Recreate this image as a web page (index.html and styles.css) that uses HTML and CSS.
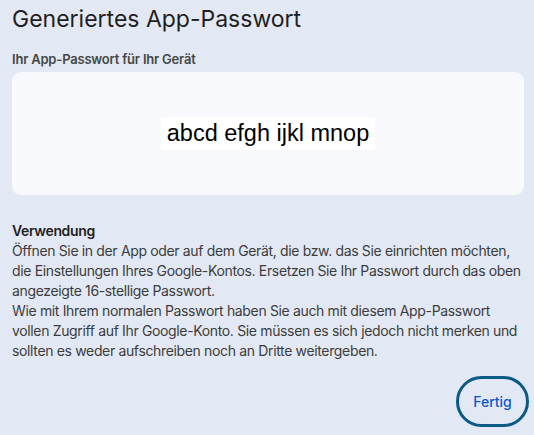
FILE: index.html
```html
<!DOCTYPE html>
<html lang="de">
<head>
    <meta charset="UTF-8">
    <title>Generiertes App-Passwort</title>
    <link rel="stylesheet" href="styles.css">
</head>
<body>
    <div class="dialog">
        <h1>Generiertes App-Passwort</h1>
        <h2>Ihr App-Passwort für Ihr Gerät</h2>
        <div class="pw-card">
            <span class="pw-value">abcd efgh ijkl mnop</span>
        </div>
        <div class="usage">
            <strong>Verwendung</strong>
            <p>Öffnen Sie in der App oder auf dem Gerät, die bzw. das Sie einrichten möchten,<br>
               die Einstellungen Ihres Google-Kontos. Ersetzen Sie Ihr Passwort durch das oben<br>
               angezeigte 16-stellige Passwort.</p>
            <p>Wie mit Ihrem normalen Passwort haben Sie auch mit diesem App-Passwort<br>
               vollen Zugriff auf Ihr Google-Konto. Sie müssen es sich jedoch nicht merken und<br>
               sollten es weder aufschreiben noch an Dritte weitergeben.</p>
        </div>
        <div class="actions">
            <button class="done">Fertig</button>
        </div>
    </div>
</body>
</html>
```
FILE: styles.css
```css
body {
    margin: 0;
    background: #e3e9f4;
    font-family: 'Inter', 'Open Sans', sans-serif;
    color: #1f1f1f;
}

.dialog {
    padding: 4px 10px 6px 12px;
}

.dialog h1 {
    margin: 0;
    font-size: 23px;
    font-weight: 400;
    line-height: 30px;
    color: #1f1f1f;
}

.dialog h2 {
    margin: 17px 0 5px;
    font-size: 13px;
    font-weight: 600;
    line-height: 16px;
    letter-spacing: -0.2px;
    color: #444746;
}

.pw-card {
    height: 123px;
    background: #f7f9fd;
    border-radius: 9px;
    display: flex;
    align-items: center;
    justify-content: center;
}

.pw-value {
    background: #ffffff;
    font-family: 'Liberation Sans', Arial, sans-serif;
    font-size: 23.5px;
    line-height: 33px;
    padding: 0 6px;
    color: #000;
}

.usage {
    margin-top: 26px;
    font-size: 14px;
    line-height: 20px;
    letter-spacing: -0.35px;
    color: #3c3c3c;
    margin-right: -10px;
}

.usage strong {
    display: block;
    font-weight: 600;
    color: #1f1f1f;
}

.usage p {
    margin: 0;
}

.actions {
    display: flex;
    justify-content: flex-end;
    margin-top: 15px;
}

.done {
    width: 73px;
    height: 51px;
    border: 3px solid #0b5a86;
    border-radius: 26px;
    background: transparent;
    color: #0b57d0;
    font-family: 'Inter', sans-serif;
    font-size: 14px;
    font-weight: 500;
    margin-right: -5px;
}
```
